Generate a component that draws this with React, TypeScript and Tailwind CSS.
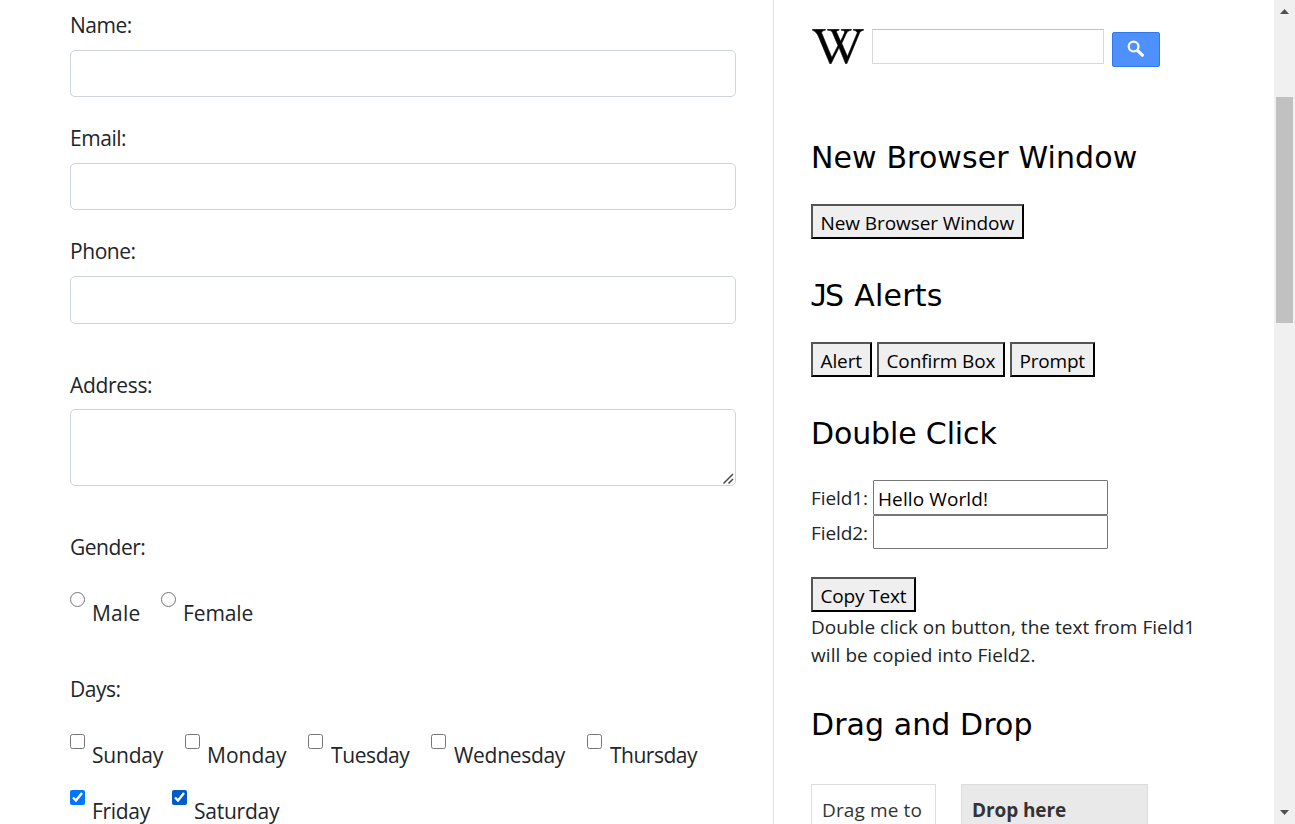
import { FaWikipediaW } from 'react-icons/fa';
import type { ReactNode } from 'react';

function Label({ text, className }: { text: string; className: string }) {
  return <label className={`block h-[34px] leading-[35px] ${className}`}>{text}</label>;
}

function TextField({ className }: { className: string }) {
  return (
    <input
      type="text"
      className={`block w-full rounded-[5px] border border-[#ced4da] bg-white px-4 outline-none ${className}`}
    />
  );
}

type OptionProps = {
  type: 'radio' | 'checkbox';
  text: string;
  item: string;
  label: string;
  checked?: boolean;
  accent?: string;
};

function Option({ type, text, item, label, checked, accent = '' }: OptionProps) {
  return (
    <div className={`flex h-[37px] shrink-0 items-start ${item}`}>
      <input type={type} name={type} defaultChecked={checked} className={`m-0 size-[15px] shrink-0 ${accent}`} />
      <label className={`mt-[5px] block leading-[33px] whitespace-nowrap ${label}`}>{text}</label>
    </div>
  );
}

function Heading({ children, className }: { children: ReactNode; className: string }) {
  return (
    <h2 className={`h-9 font-['DejaVu_Sans',Verdana,sans-serif] text-[30px] leading-9 font-normal whitespace-nowrap text-black ${className}`}>
      {children}
    </h2>
  );
}

function Button({ text, className }: { text: string; className: string }) {
  return (
    <button
      className={`block h-[35px] shrink-0 border-2 border-t-[#555] border-r-black border-b-black border-l-[#555] bg-[#efefef] text-left leading-[34px] whitespace-nowrap text-black ${className}`}
    >
      <span className="block h-[31px]">{text}</span>
    </button>
  );
}

const weekdays: OptionProps[] = [
  { type: 'checkbox', text: 'Sunday', item: 'w-[115px]', label: 'ml-[7px] tracking-[-0.2px]' },
  { type: 'checkbox', text: 'Monday', item: 'w-[123px]', label: 'ml-[7px]' },
  { type: 'checkbox', text: 'Tuesday', item: 'w-[123px]', label: 'ml-2 tracking-[-0.4px]' },
  { type: 'checkbox', text: 'Wednesday', item: 'w-[156px]', label: 'ml-2 tracking-[-0.3px]' },
  { type: 'checkbox', text: 'Thursday', item: 'w-[115px]', label: 'ml-2 tracking-[-0.5px]' },
];

const weekend: OptionProps[] = [
  { type: 'checkbox', text: 'Friday', item: 'w-[102px]', label: 'ml-[7px] tracking-[-0.3px]', checked: true },
  { type: 'checkbox', text: 'Saturday', item: 'w-[115px]', label: 'ml-[7px] tracking-[-0.25px]', checked: true, accent: 'accent-[#005cc8]' },
];

function DetailsForm() {
  return (
    <form className="w-[773px] shrink-0 pt-2 pr-[37px] pl-[70px] text-[21px]">
      <Label text="Name:" className="mb-2 tracking-[-0.47px]" />
      <TextField className="h-[47px]" />
      <Label text="Email:" className="mt-6 mb-2 tracking-[-0.46px]" />
      <TextField className="h-[47px]" />
      <Label text="Phone:" className="mt-6 mb-2 tracking-[-0.44px]" />
      <TextField className="h-12" />
      <Label text="Address:" className="mt-11 mb-[7px] tracking-[-0.33px]" />
      <div className="relative h-[77px]">
        <textarea className="block h-[77px] w-full resize-none rounded-[5px] border border-[#ced4da] bg-white px-4 py-2 outline-none" />
        <svg className="absolute right-[2px] bottom-[2px] size-[11px]" viewBox="0 0 11 11" fill="none" stroke="#4a4a4a" strokeWidth="1.5">
          <path d="M0.5 10.5L10 1M5.5 10.5L10 6" />
        </svg>
      </div>
      <Label text="Gender:" className="mt-11 tracking-[-0.47px]" />
      <div className="mt-7 flex">
        <Option type="radio" text="Male" item="w-[91px]" label="ml-[7px] tracking-[0.2px]" />
        <Option type="radio" text="Female" item="w-[100px]" label="ml-[7px] tracking-[-0.1px]" />
      </div>
      <Label text="Days:" className="mt-[43px] tracking-[-0.5px]" />
      <div className="mt-7 flex">
        {weekdays.map((day) => (
          <Option key={day.text} {...day} />
        ))}
      </div>
      <div className="mt-[19px] flex">
        {weekend.map((day) => (
          <Option key={day.text} {...day} />
        ))}
      </div>
    </form>
  );
}

function WikiSearch() {
  return (
    <div className="flex h-[38px] items-start">
      <svg className="ml-px block h-[35px] w-[52px] text-black" viewBox="-3 112 646 416" preserveAspectRatio="none">
        <FaWikipediaW size={640} stroke="currentColor" strokeWidth={7} />
      </svg>
      <input type="text" className="ml-2 block h-[35px] w-[232px] border border-[#d9d9d9] border-t-[#c0c0c0] bg-white px-2 outline-none" />
      <button className="mt-[3px] ml-2 flex h-[35px] w-12 justify-center rounded-xs border border-[#3079ed] bg-[#4d90fe] pt-[7px]">
        <svg className="block size-[18px]" viewBox="0 0 18 18" fill="none" stroke="#fff">
          <circle cx="6.6" cy="6.6" r="4.9" strokeWidth="2.2" />
          <path d="M10.6 10.6L15.4 15.2" strokeWidth="3.2" strokeLinecap="round" />
        </svg>
      </button>
    </div>
  );
}

function Sidebar() {
  return (
    <aside className="w-[501px] shrink-0 border-l border-[#dee2e6] pt-[29px] pl-[37px] text-[19px]">
      <WikiSearch />
      <Heading className="mt-[73px] tracking-[0.11px]">New Browser Window</Heading>
      <Button text="New Browser Window" className="mt-7 w-[213px] pl-[7.5px] tracking-[-0.08px]" />

      <Heading className="mt-[39px] tracking-[0.25px]">
        <span className="-ml-px font-['DejaVu_Sans_Mono',monospace] tracking-[-3px]">J</span>S Alerts
      </Heading>
      <div className="mt-7 flex gap-[5px]">
        <Button text="Alert" className="w-[61px] pl-[7.5px] tracking-[-0.1px]" />
        <Button text="Confirm Box" className="w-32 pl-[7.5px] tracking-[-0.12px]" />
        <Button text="Prompt" className="w-[85px] pl-[7.5px] tracking-[-0.2px]" />
      </div>

      <Heading className="mt-[39px] tracking-[-0.14px]">Double Click</Heading>
      <div className="mt-7 flex h-[35px]">
        <label className="w-[62px] leading-9 tracking-[-0.1px]">Field1:</label>
        <input
          type="text"
          defaultValue="Hello World!"
          className="block h-[35px] w-[235px] rounded-[1px] border border-[#767676] bg-white pt-[3px] pl-1 tracking-[0.1px] text-black outline-none"
        />
      </div>
      <div className="flex h-[34px]">
        <label className="w-[62px] leading-9 tracking-[-0.1px]">Field2:</label>
        <input type="text" className="block h-[34px] w-[235px] rounded-[1px] border border-[#767676] bg-white pl-1 text-black outline-none" />
      </div>
      <Button text="Copy Text" className="mt-7 w-[105px] pl-[7.5px] tracking-[-0.16px]" />
      <p className="mt-px leading-7 whitespace-nowrap">
        <span className="tracking-[0.02px]">Double click on button, the text from Field1</span>
        <br />
        <span className="tracking-[0.07px]">will be copied into Field2.</span>
      </p>

      <Heading className="mt-[38px] tracking-[0.08px]">Drag and Drop</Heading>
      <div className="mt-[41px] flex gap-[25px] leading-7 text-[#333]">
        <div className="h-[140px] w-[125px] border border-[#ddd] pt-[11px] pl-2.5 tracking-[0.12px] whitespace-nowrap">Drag me to</div>
        <div className="h-[180px] w-[187px] border border-[#ddd] bg-[#e9e9e9] pt-[11px] pl-2.5 font-bold tracking-[-0.1px]">Drop here</div>
      </div>
    </aside>
  );
}

function Scrollbar() {
  return (
    <div className="flex w-[21px] shrink-0 flex-col items-center bg-[#f0f0f0]">
      <svg className="mt-[9px] block h-[5px] w-[9px] shrink-0" viewBox="0 0 9 5" fill="#505050">
        <path d="M4.5 0L9 5H0Z" />
      </svg>
      <div className="mt-[83px] h-[226px] w-[17px] shrink-0 bg-[#c1c1c1]" />
      <svg className="mt-auto mb-[9px] block h-[5px] w-[9px] shrink-0" viewBox="0 0 9 5" fill="#505050">
        <path d="M0 0H9L4.5 5Z" />
      </svg>
    </div>
  );
}

export default function App() {
  return (
    <div className="flex h-[824px] w-[1295px] overflow-hidden bg-white font-['Open_Sans','Noto_Sans',sans-serif] text-[#212529]">
      <DetailsForm />
      <Sidebar />
      <Scrollbar />
    </div>
  );
}
